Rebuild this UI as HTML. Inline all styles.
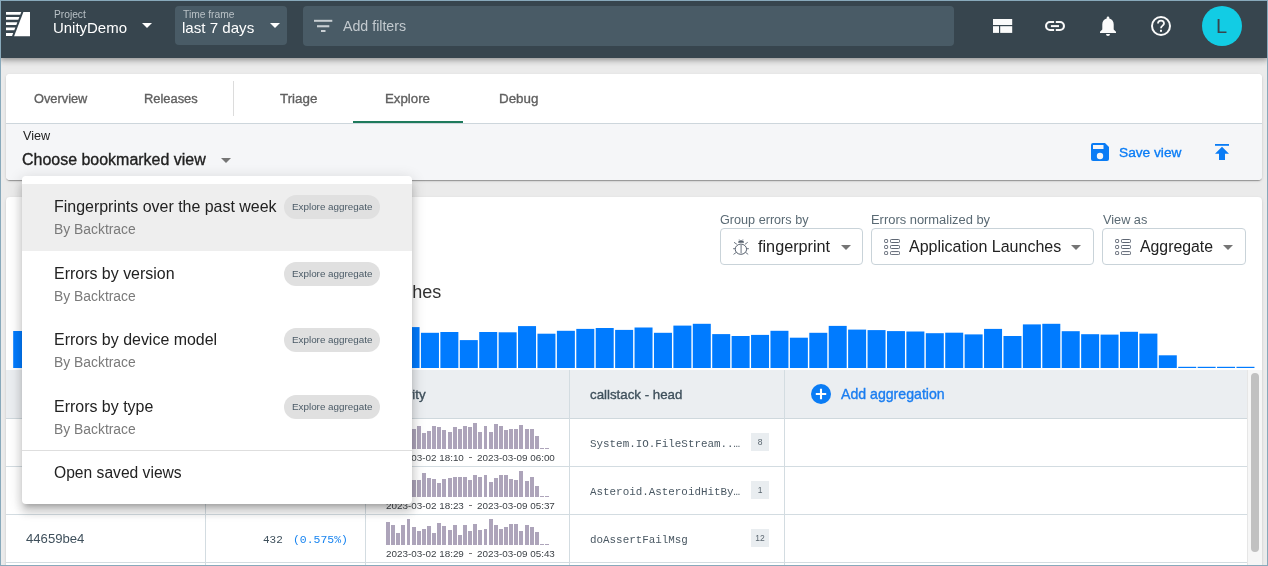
<!DOCTYPE html>
<html><head><meta charset="utf-8"><style>
*{box-sizing:border-box;margin:0;padding:0}
html,body{width:1268px;height:566px;overflow:hidden}
body{position:relative;-webkit-font-smoothing:antialiased;background:#ebebeb;font-family:"Liberation Sans",sans-serif;color:#222}
.abs{position:absolute}
.t{position:absolute;white-space:nowrap;line-height:1;will-change:transform}
#frame{position:absolute;left:0;top:0;width:1268px;height:566px;border:1px solid #88a9bb;pointer-events:none;z-index:100}
#hdr{position:absolute;left:0;top:0;width:1268px;height:58px;background:#37454e;box-shadow:0 2px 4px -1px rgba(0,0,0,.2),0 4px 5px 0 rgba(0,0,0,.14),0 1px 10px 0 rgba(0,0,0,.12);z-index:5}
.hbox{position:absolute;background:#495b66;border-radius:4px}
.caretw{position:absolute;width:0;height:0;border-left:5px solid transparent;border-right:5px solid transparent;border-top:5px solid #fff}
.caretg{position:absolute;width:0;height:0;border-left:5px solid transparent;border-right:5px solid transparent;border-top:5px solid #757575;margin-left:-0.5px}
.card{position:absolute;background:#fff;border-radius:4px;box-shadow:0 2px 1px -1px rgba(0,0,0,.2),0 1px 1px 0 rgba(0,0,0,.14),0 1px 3px 0 rgba(0,0,0,.12)}
.chip{position:absolute;width:96px;height:24px;border-radius:12px;background:#e0e0e0}
</style></head><body>
<div id="hdr">
  <svg class="abs" style="left:6px;top:12px" width="24" height="25" viewBox="0 0 24 25">
    <polygon points="17.4,0 24,0 24,24.2 8.1,24.2" fill="#fff"/>
    <polygon points="0,0.00 15.30,0.00 14.22,2.80 0,2.80" fill="#fff"/>
    <polygon points="0,5.00 13.37,5.00 12.30,7.80 0,7.80" fill="#fff"/>
    <polygon points="0,10.30 11.33,10.30 10.33,12.90 0,12.90" fill="#fff"/>
    <polygon points="0,15.40 9.37,15.40 8.25,18.30 0,18.30" fill="#fff"/>
    <polygon points="0,21.00 7.21,21.00 6.06,24.00 0,24.00" fill="#fff"/>
  </svg>
  <div class="caretw" style="left:142px;top:23px"></div>
  <div class="hbox" style="left:175px;top:6px;width:112px;height:39px"></div>
  <div class="caretw" style="left:270px;top:23px"></div>
  <div class="hbox" style="left:303px;top:6px;width:651px;height:40px"></div>
  <svg class="abs" style="left:314px;top:19px" width="19" height="13" viewBox="0 0 19 13">
    <rect x="0" y="0.8" width="18.3" height="2" fill="#c9cfd3"/>
    <rect x="3" y="6.2" width="12.3" height="2.1" fill="#c9cfd3"/>
    <rect x="7" y="11" width="4.5" height="2" fill="#c9cfd3"/>
  </svg>
  <svg class="abs" style="left:993px;top:19px" width="20" height="15" viewBox="0 0 20 15">
    <rect x="0" y="0" width="19.2" height="6" fill="#fafafa"/>
    <rect x="0" y="7.2" width="6" height="6.7" fill="#fafafa"/>
    <rect x="7.2" y="7.2" width="12" height="6.7" fill="#fafafa"/>
  </svg>
  <svg class="abs" style="left:1045px;top:21px" width="20" height="10" viewBox="0 0 20 10">
    <path d="M9.1 1.05H5A3.95 3.95 0 0 0 5 8.95H9.1M10.8 1.05H15A3.95 3.95 0 0 1 15 8.95H10.8" stroke="#fafafa" stroke-width="2.1" fill="none"/>
    <rect x="5.9" y="4.1" width="8.1" height="2" fill="#fafafa"/>
  </svg>
  <svg class="abs" style="left:1099px;top:16px" width="18" height="20" viewBox="0 0 18 20">
    <path d="M9 0.5c.8 0 1.3.6 1.3 1.3v.7c2.7.7 4.4 3 4.4 5.8v5.2L17 15.8v1.2H1v-1.2l2.3-2.3V8.3c0-2.8 1.700-5.1 4.4-5.8v-.7C7.7 1.1 8.2.5 9 .5z M7 18h4a2 2 0 0 1-4 0z" fill="#fafafa"/>
  </svg>
  <svg class="abs" style="left:1151px;top:16px" width="20" height="20" viewBox="0 0 20 20">
    <circle cx="10" cy="10" r="9" stroke="#fafafa" stroke-width="2" fill="none"/>
    <path d="M7 7.6a3 3 0 0 1 6 0c0 2-3 2.2-3 4.6" stroke="#fafafa" stroke-width="1.8" fill="none"/>
    <rect x="9" y="13.8" width="2" height="2" fill="#fafafa"/>
  </svg>
  <div class="abs" style="left:1202px;top:6px;width:40px;height:40px;border-radius:50%;background:#12cce4"></div>
  <div class="t" style="left:1216px;top:16.1px;font-size:20px;color:#37454e">L</div>
<div class="t" style="left:53.6px;top:9.5px;font-size:10.21px;color:#b9c1c6;">Project</div>
<div class="t" style="left:53.3px;top:20.9px;font-size:14.96px;color:#fff;">UnityDemo</div>
<div class="t" style="left:183.2px;top:10.0px;font-size:10.26px;color:#b9c1c6;">Time frame</div>
<div class="t" style="left:182.4px;top:20.2px;font-size:15.12px;color:#fff;">last 7 days</div>
<div class="t" style="left:343.2px;top:19.2px;font-size:14.20px;color:#c3cacf;">Add filters</div>
</div>
<div class="card" style="left:6px;top:74px;width:1256px;height:106px;overflow:hidden">
  <div class="abs" style="left:0;top:0;width:1256px;height:50px;border-bottom:1px solid #cdd6dc;background:#fff"></div>
  <div class="abs" style="left:0;top:50px;width:1256px;height:56px;background:#f5f6f8"></div>
</div>
<div class="abs" style="left:233px;top:81px;width:1px;height:35px;background:#dcdcdc"></div>
<div class="abs" style="left:353px;top:121px;width:110px;height:2px;background:#1e7a5c"></div>
<div class="caretg" style="left:221.5px;top:158px"></div>
<svg class="abs" style="left:1091px;top:143px" width="18" height="18" viewBox="0 0 18 18">
  <path d="M2 0h12l4 4v12a2 2 0 0 1-2 2H2a2 2 0 0 1-2-2V2a2 2 0 0 1 2-2z" fill="#0a7cf5"/>
  <rect x="2" y="2" width="10.5" height="4" fill="#f5f6f8"/>
  <circle cx="9" cy="13" r="3.2" fill="#f5f6f8"/>
</svg>
<svg class="abs" style="left:1215px;top:144px" width="14" height="16" viewBox="0 0 14 16">
  <rect x="0" y="0" width="14" height="1.8" fill="#0a7cf5"/>
  <path d="M7 2.8L14 9.8H10V15.9H4V9.8H0z" fill="#0a7cf5"/>
</svg>
<div class="t" style="left:33.9px;top:92.6px;font-size:12.80px;color:#606060;-webkit-text-stroke:0.35px currentColor;">Overview</div>
<div class="t" style="left:143.8px;top:92.5px;font-size:12.89px;color:#606060;-webkit-text-stroke:0.35px currentColor;">Releases</div>
<div class="t" style="left:280.0px;top:92.1px;font-size:13.36px;color:#606060;-webkit-text-stroke:0.35px currentColor;">Triage</div>
<div class="t" style="left:385.4px;top:92.2px;font-size:13.25px;color:#606060;-webkit-text-stroke:0.35px currentColor;">Explore</div>
<div class="t" style="left:498.5px;top:92.1px;font-size:13.36px;color:#606060;-webkit-text-stroke:0.35px currentColor;">Debug</div>
<div class="t" style="left:22.5px;top:130.1px;font-size:12.65px;color:#222;">View</div>
<div class="t" style="left:21.7px;top:151.9px;font-size:15.98px;color:#222;-webkit-text-stroke:0.35px currentColor;">Choose bookmarked view</div>
<div class="t" style="left:1119.3px;top:146.0px;font-size:13.69px;color:#0a7cf5;-webkit-text-stroke:0.35px currentColor;">Save view</div>
<div class="card" style="left:6px;top:197px;width:1256px;height:380px"></div>
<div class="abs" style="left:720px;top:228px;width:143px;height:37px;border:1px solid #c9d3d9;border-radius:4px;background:#fff"></div>
<svg class="abs" style="left:733px;top:239px" width="16" height="17" viewBox="0 0 16 17" fill="none" stroke="#56606d" stroke-width="1">
  <path d="M5.1 3.7L5.7 1.7Q8 0.9 10.4 1.7L11.1 3.7Z" fill="#56606d" stroke="none"/>
  <path d="M5.6 0.4h1.3M9.2 0.4h1.3" stroke-width=".6" stroke="#9aa2ab"/>
  <ellipse cx="7.9" cy="10.2" rx="5.7" ry="5.1"/>
  <path d="M8.1 5.3v9" stroke="#8a929c" stroke-width="1.3"/>
  <path d="M1 3.3L3.9 5.3M14.7 3.3L12 5.3M0.1 9.7H2.3M13.6 9.7h2.3M0.5 15.4L3.7 13.1M15.2 15.4L12.2 13.1" stroke="#6d7682"/>
</svg>
<div class="caretg" style="left:841px;top:245px"></div>
<div class="abs" style="left:871px;top:228px;width:223px;height:37px;border:1px solid #c9d3d9;border-radius:4px;background:#fff"></div>
<div class="caretg" style="left:1071.5px;top:245px"></div>
<div class="abs" style="left:1102px;top:228px;width:144px;height:37px;border:1px solid #c9d3d9;border-radius:4px;background:#fff"></div>
<div class="caretg" style="left:1223.5px;top:245px"></div>
<svg class="abs" style="left:884px;top:239px" width="16" height="16" viewBox="0 0 16 16" fill="none" stroke="#5e6673" stroke-width="1">
  <rect x="0.6" y="0.5" width="3" height="3" rx=".7"/><rect x="0.6" y="6.5" width="3" height="3" rx=".7"/><rect x="0.6" y="12.6" width="3" height="3" rx=".7"/>
  <rect x="6.5" y="0.5" width="9" height="3" rx=".8"/><rect x="6.5" y="6.5" width="9" height="3" rx=".8"/><rect x="6.5" y="12.6" width="9" height="3" rx=".8"/>
</svg>
<svg class="abs" style="left:1115px;top:239px" width="16" height="16" viewBox="0 0 16 16" fill="none" stroke="#5e6673" stroke-width="1">
  <rect x="0.6" y="0.5" width="3" height="3" rx=".7"/><rect x="0.6" y="6.5" width="3" height="3" rx=".7"/><rect x="0.6" y="12.6" width="3" height="3" rx=".7"/>
  <rect x="6.5" y="0.5" width="9" height="3" rx=".8"/><rect x="6.5" y="6.5" width="9" height="3" rx=".8"/><rect x="6.5" y="12.6" width="9" height="3" rx=".8"/>
</svg>
<div class="t" style="left:720.4px;top:214.0px;font-size:12.65px;color:#5a6a74;">Group errors by</div>
<div class="t" style="left:870.9px;top:213.8px;font-size:12.92px;color:#5a6a74;">Errors normalized by</div>
<div class="t" style="left:1103.0px;top:213.9px;font-size:12.72px;color:#5a6a74;">View as</div>
<div class="t" style="left:757.5px;top:238.3px;font-size:16.23px;color:#222;">fingerprint</div>
<div class="t" style="left:909.1px;top:238.4px;font-size:16.02px;color:#222;">Application Launches</div>
<div class="t" style="left:1140.0px;top:238.6px;font-size:15.83px;color:#222;">Aggregate</div>
<div class="abs" style="left:22px;top:270px;width:430px;height:40px;overflow:hidden"><div class="t" style="right:10.5px;top:12.6px;font-size:18.00px;color:#333">Errors by fingerprint normalized by Application Launches</div></div>
<svg class="abs" style="left:0;top:0" width="1268" height="370"><g fill="#007bff"><rect x="13.20" y="331.00" width="18" height="37.00"/><rect x="32.62" y="328.38" width="18" height="39.62"/><rect x="52.03" y="331.44" width="18" height="36.56"/><rect x="71.45" y="329.70" width="18" height="38.30"/><rect x="90.87" y="332.04" width="18" height="35.96"/><rect x="110.29" y="332.26" width="18" height="35.74"/><rect x="129.70" y="326.66" width="18" height="41.34"/><rect x="149.12" y="326.13" width="18" height="41.87"/><rect x="168.54" y="334.37" width="18" height="33.63"/><rect x="187.95" y="328.59" width="18" height="39.41"/><rect x="207.37" y="328.34" width="18" height="39.66"/><rect x="226.79" y="335.96" width="18" height="32.04"/><rect x="246.20" y="330.70" width="18" height="37.30"/><rect x="265.62" y="334.36" width="18" height="33.64"/><rect x="285.04" y="330.76" width="18" height="37.24"/><rect x="304.45" y="332.39" width="18" height="35.61"/><rect x="323.87" y="327.51" width="18" height="40.49"/><rect x="343.29" y="332.35" width="18" height="35.65"/><rect x="362.71" y="334.68" width="18" height="33.32"/><rect x="382.12" y="331.23" width="18" height="36.77"/><rect x="401.54" y="327.10" width="18" height="40.90"/><rect x="420.96" y="332.80" width="18" height="35.20"/><rect x="440.37" y="332.00" width="18" height="36.00"/><rect x="459.79" y="340.10" width="18" height="27.90"/><rect x="479.21" y="332.00" width="18" height="36.00"/><rect x="498.63" y="332.30" width="18" height="35.70"/><rect x="518.04" y="326.10" width="18" height="41.90"/><rect x="537.46" y="333.70" width="18" height="34.30"/><rect x="556.88" y="330.80" width="18" height="37.20"/><rect x="576.29" y="328.90" width="18" height="39.10"/><rect x="595.71" y="328.00" width="18" height="40.00"/><rect x="615.13" y="329.90" width="18" height="38.10"/><rect x="634.54" y="327.50" width="18" height="40.50"/><rect x="653.96" y="332.80" width="18" height="35.20"/><rect x="673.38" y="325.60" width="18" height="42.40"/><rect x="692.80" y="323.80" width="18" height="44.20"/><rect x="712.21" y="334.10" width="18" height="33.90"/><rect x="731.63" y="336.00" width="18" height="32.00"/><rect x="751.05" y="334.90" width="18" height="33.10"/><rect x="770.46" y="330.80" width="18" height="37.20"/><rect x="789.88" y="337.70" width="18" height="30.30"/><rect x="809.30" y="332.80" width="18" height="35.20"/><rect x="828.71" y="325.90" width="18" height="42.10"/><rect x="848.13" y="329.60" width="18" height="38.40"/><rect x="867.55" y="330.10" width="18" height="37.90"/><rect x="886.97" y="331.10" width="18" height="36.90"/><rect x="906.38" y="331.50" width="18" height="36.50"/><rect x="925.80" y="333.20" width="18" height="34.80"/><rect x="945.22" y="332.70" width="18" height="35.30"/><rect x="964.63" y="334.40" width="18" height="33.60"/><rect x="984.05" y="328.90" width="18" height="39.10"/><rect x="1003.47" y="336.00" width="18" height="32.00"/><rect x="1022.88" y="324.40" width="18" height="43.60"/><rect x="1042.30" y="323.80" width="18" height="44.20"/><rect x="1061.72" y="331.20" width="18" height="36.80"/><rect x="1081.14" y="334.20" width="18" height="33.80"/><rect x="1100.55" y="334.60" width="18" height="33.40"/><rect x="1119.97" y="331.80" width="18" height="36.20"/><rect x="1139.39" y="333.60" width="18" height="34.40"/><rect x="1158.80" y="355.30" width="18" height="12.70"/><rect x="1178.22" y="366.80" width="18" height="1.20"/><rect x="1197.64" y="366.80" width="18" height="1.20"/><rect x="1217.05" y="366.80" width="18" height="1.20"/><rect x="1236.47" y="366.80" width="18" height="1.20"/></g></svg><div class="abs" style="left:6px;top:370px;width:1241px;height:49px;background:#ebeef1;border-bottom:1px solid #cfd8dd"></div>
<div class="abs" style="left:6px;top:419px;width:1241px;height:48px;border-bottom:1px solid #d3dce1;background:#fff"></div>
<div class="abs" style="left:6px;top:467px;width:1241px;height:48px;border-bottom:1px solid #d3dce1;background:#fff"></div>
<div class="abs" style="left:6px;top:515px;width:1241px;height:48px;border-bottom:1px solid #d3dce1;background:#fff"></div>
<div class="abs" style="left:205px;top:370px;width:1px;height:196px;background:#d3dce1"></div>
<div class="abs" style="left:365px;top:370px;width:1px;height:196px;background:#d3dce1"></div>
<div class="abs" style="left:569px;top:370px;width:1px;height:196px;background:#d3dce1"></div>
<div class="abs" style="left:784px;top:370px;width:1px;height:196px;background:#d3dce1"></div>
<svg class="abs" style="left:811px;top:384px" width="20" height="20" viewBox="0 0 20 20">
  <circle cx="10" cy="10" r="10" fill="#0a7cf5"/><path d="M10 4.8v10.4M4.8 10h10.4" stroke="#fff" stroke-width="2.1"/>
</svg>
<div class="t" style="left:26px;top:387px;font-size:13.3px;color:#3f505c;-webkit-text-stroke:0.35px currentColor;">fingerprint</div>
<div class="t" style="left:226px;top:387px;font-size:13.3px;color:#3f505c;-webkit-text-stroke:0.35px currentColor;">count</div>
<div class="t" style="left:385.0px;top:387.6px;font-size:13.30px;color:#3f505c;-webkit-text-stroke:0.35px currentColor;">activity</div>
<div class="t" style="left:589.5px;top:387.6px;font-size:13.30px;color:#3f505c;-webkit-text-stroke:0.35px currentColor;">callstack - head</div>
<div class="t" style="left:841.4px;top:386.8px;font-size:14.13px;color:#1a7df0;-webkit-text-stroke:0.35px currentColor;">Add aggregation</div>
<svg class="abs" style="left:0;top:0" width="1268" height="566"><g fill="#ada4ba" shape-rendering="crispEdges"><rect x="386.00" y="430.80" width="3.9" height="18.00"/><rect x="391.13" y="428.80" width="3.9" height="20.00"/><rect x="396.27" y="432.80" width="3.9" height="16.00"/><rect x="401.40" y="427.80" width="3.9" height="21.00"/><rect x="406.54" y="429.80" width="3.9" height="19.00"/><rect x="411.67" y="429.40" width="3.9" height="19.40"/><rect x="416.80" y="426.40" width="3.9" height="22.40"/><rect x="421.94" y="433.30" width="3.9" height="15.50"/><rect x="427.07" y="431.30" width="3.9" height="17.50"/><rect x="432.21" y="426.40" width="3.9" height="22.40"/><rect x="437.34" y="427.40" width="3.9" height="21.40"/><rect x="442.47" y="430.30" width="3.9" height="18.50"/><rect x="447.61" y="432.30" width="3.9" height="16.50"/><rect x="452.74" y="427.40" width="3.9" height="21.40"/><rect x="457.88" y="429.40" width="3.9" height="19.40"/><rect x="463.01" y="426.40" width="3.9" height="22.40"/><rect x="468.14" y="427.40" width="3.9" height="21.40"/><rect x="473.28" y="423.40" width="3.9" height="25.40"/><rect x="478.41" y="432.30" width="3.9" height="16.50"/><rect x="483.55" y="426.40" width="3.9" height="22.40"/><rect x="488.68" y="432.30" width="3.9" height="16.50"/><rect x="493.81" y="424.40" width="3.9" height="24.40"/><rect x="498.95" y="426.40" width="3.9" height="22.40"/><rect x="504.08" y="430.30" width="3.9" height="18.50"/><rect x="509.22" y="429.40" width="3.9" height="19.40"/><rect x="514.35" y="429.40" width="3.9" height="19.40"/><rect x="519.48" y="425.40" width="3.9" height="23.40"/><rect x="524.62" y="429.40" width="3.9" height="19.40"/><rect x="529.75" y="429.40" width="3.9" height="19.40"/><rect x="534.89" y="436.30" width="3.9" height="12.50"/><rect x="540.02" y="447.80" width="3.9" height="1.00"/><rect x="545.15" y="447.80" width="3.9" height="1.00"/><rect x="386.00" y="479.80" width="3.9" height="17.00"/><rect x="391.13" y="477.80" width="3.9" height="19.00"/><rect x="396.27" y="474.80" width="3.9" height="22.00"/><rect x="401.40" y="478.80" width="3.9" height="18.00"/><rect x="406.54" y="480.80" width="3.9" height="16.00"/><rect x="411.67" y="480.30" width="3.9" height="16.50"/><rect x="416.80" y="480.30" width="3.9" height="16.50"/><rect x="421.94" y="473.40" width="3.9" height="23.40"/><rect x="427.07" y="478.30" width="3.9" height="18.50"/><rect x="432.21" y="479.30" width="3.9" height="17.50"/><rect x="437.34" y="483.30" width="3.9" height="13.50"/><rect x="442.47" y="479.30" width="3.9" height="17.50"/><rect x="447.61" y="478.30" width="3.9" height="18.50"/><rect x="452.74" y="477.40" width="3.9" height="19.40"/><rect x="457.88" y="477.40" width="3.9" height="19.40"/><rect x="463.01" y="477.40" width="3.9" height="19.40"/><rect x="468.14" y="480.30" width="3.9" height="16.50"/><rect x="473.28" y="475.40" width="3.9" height="21.40"/><rect x="478.41" y="477.40" width="3.9" height="19.40"/><rect x="483.55" y="475.40" width="3.9" height="21.40"/><rect x="488.68" y="482.30" width="3.9" height="14.50"/><rect x="493.81" y="478.30" width="3.9" height="18.50"/><rect x="498.95" y="475.40" width="3.9" height="21.40"/><rect x="504.08" y="475.40" width="3.9" height="21.40"/><rect x="509.22" y="479.30" width="3.9" height="17.50"/><rect x="514.35" y="480.30" width="3.9" height="16.50"/><rect x="519.48" y="471.40" width="3.9" height="25.40"/><rect x="524.62" y="481.30" width="3.9" height="15.50"/><rect x="529.75" y="477.40" width="3.9" height="19.40"/><rect x="534.89" y="486.30" width="3.9" height="10.50"/><rect x="540.02" y="495.80" width="3.9" height="1.00"/><rect x="545.15" y="495.80" width="3.9" height="1.00"/><rect x="386.00" y="522.10" width="3.9" height="22.70"/><rect x="391.13" y="524.90" width="3.9" height="19.90"/><rect x="396.27" y="533.00" width="3.9" height="11.80"/><rect x="401.40" y="524.90" width="3.9" height="19.90"/><rect x="406.54" y="519.00" width="3.9" height="25.80"/><rect x="411.67" y="527.10" width="3.9" height="17.70"/><rect x="416.80" y="531.00" width="3.9" height="13.80"/><rect x="421.94" y="528.90" width="3.9" height="15.90"/><rect x="427.07" y="526.10" width="3.9" height="18.70"/><rect x="432.21" y="533.00" width="3.9" height="11.80"/><rect x="437.34" y="523.10" width="3.9" height="21.70"/><rect x="442.47" y="526.10" width="3.9" height="18.70"/><rect x="447.61" y="530.00" width="3.9" height="14.80"/><rect x="452.74" y="524.90" width="3.9" height="19.90"/><rect x="457.88" y="535.00" width="3.9" height="9.80"/><rect x="463.01" y="524.90" width="3.9" height="19.90"/><rect x="468.14" y="531.00" width="3.9" height="13.80"/><rect x="473.28" y="524.10" width="3.9" height="20.70"/><rect x="478.41" y="530.00" width="3.9" height="14.80"/><rect x="483.55" y="528.90" width="3.9" height="15.90"/><rect x="488.68" y="519.00" width="3.9" height="25.80"/><rect x="493.81" y="524.90" width="3.9" height="19.90"/><rect x="498.95" y="528.90" width="3.9" height="15.90"/><rect x="504.08" y="527.10" width="3.9" height="17.70"/><rect x="509.22" y="524.10" width="3.9" height="20.70"/><rect x="514.35" y="524.10" width="3.9" height="20.70"/><rect x="519.48" y="531.00" width="3.9" height="13.80"/><rect x="524.62" y="524.90" width="3.9" height="19.90"/><rect x="529.75" y="527.10" width="3.9" height="17.70"/><rect x="534.89" y="532.00" width="3.9" height="12.80"/><rect x="540.02" y="543.80" width="3.9" height="1.00"/><rect x="545.15" y="543.80" width="3.9" height="1.00"/></g></svg><div class="t" style="left:385.5px;top:452.5px;font-size:9.87px;color:#3a3f44;">2023-03-02 18:10</div>
<div class="t" style="left:476.5px;top:452.5px;font-size:9.87px;color:#3a3f44;">2023-03-09 06:00</div>
<div class="abs" style="left:469px;top:457.2px;width:2.5px;height:1px;background:#777"></div>
<div class="t" style="left:385.5px;top:500.5px;font-size:9.87px;color:#3a3f44;">2023-03-02 18:23</div>
<div class="t" style="left:476.5px;top:500.5px;font-size:9.87px;color:#3a3f44;">2023-03-09 05:37</div>
<div class="abs" style="left:469px;top:505.2px;width:2.5px;height:1px;background:#777"></div>
<div class="t" style="left:385.5px;top:548.5px;font-size:9.87px;color:#3a3f44;">2023-03-02 18:29</div>
<div class="t" style="left:476.5px;top:548.5px;font-size:9.87px;color:#3a3f44;">2023-03-09 05:43</div>
<div class="abs" style="left:469px;top:553.2px;width:2.5px;height:1px;background:#777"></div>
<div class="t" style="left:589.9px;top:439.0px;font-size:10.88px;color:#4a5863;font-family:'Liberation Mono',monospace;">System.IO.FileStream..…</div>
<div class="abs" style="left:751px;top:433px;width:18px;height:18px;background:#e9edf0;font-size:8.5px;color:#5a666f;text-align:center;line-height:18px;will-change:transform">8</div>
<div class="t" style="left:589.9px;top:487.0px;font-size:10.88px;color:#4a5863;font-family:'Liberation Mono',monospace;">Asteroid.AsteroidHitBy…</div>
<div class="abs" style="left:751px;top:481px;width:18px;height:18px;background:#e9edf0;font-size:8.5px;color:#5a666f;text-align:center;line-height:18px;will-change:transform">1</div>
<div class="t" style="left:589.9px;top:535.0px;font-size:10.88px;color:#4a5863;font-family:'Liberation Mono',monospace;">doAssertFailMsg</div>
<div class="abs" style="left:751px;top:529px;width:18px;height:18px;background:#e9edf0;font-size:8.5px;color:#5a666f;text-align:center;line-height:18px;will-change:transform">12</div>
<div class="t" style="left:25.7px;top:531.8px;font-size:13.14px;color:#3f505c;">44659be4</div>
<div class="t" style="left:262.5px;top:534.6px;font-size:10.99px;color:#3f505c;font-family:'Liberation Mono',monospace;">432</div>
<div class="t" style="left:292.5px;top:534.2px;font-size:11.46px;color:#1a85f0;font-family:'Liberation Mono',monospace;">(0.575%)</div>
<div class="abs" style="left:1247px;top:370px;width:15px;height:196px;background:#f6f6f6;border-left:1px solid #e6e6e6"></div>
<div class="abs" style="left:1251px;top:373px;width:8px;height:179px;background:#c1c1c1;border-radius:4px"></div>
<div class="abs" style="left:22px;top:176px;width:390px;height:328px;background:#fff;border-radius:4px;box-shadow:0 5px 5px -3px rgba(0,0,0,.2),0 8px 10px 1px rgba(0,0,0,.14),0 3px 14px 2px rgba(0,0,0,.12);z-index:10"></div>
<div style="position:absolute;left:0;top:0;z-index:11">
<div class="abs" style="left:22px;top:184px;width:390px;height:67px;background:#eeeeee"></div>
<div class="abs" style="left:22px;top:450px;width:390px;height:1px;background:#dedede"></div>
<div class="t" style="left:53.7px;top:198.7px;font-size:15.96px;color:#222;">Fingerprints over the past week</div>
<div class="t" style="left:53.9px;top:222.5px;font-size:13.89px;color:#7a7a7a;">By Backtrace</div>
<div class="chip" style="left:284px;top:195px"></div>
<div class="t" style="left:292.0px;top:201.5px;font-size:9.86px;color:#4a5a66;">Explore aggregate</div>
<div class="t" style="left:53.7px;top:265.7px;font-size:15.96px;color:#222;">Errors by version</div>
<div class="t" style="left:53.9px;top:289.5px;font-size:13.89px;color:#7a7a7a;">By Backtrace</div>
<div class="chip" style="left:284px;top:262px"></div>
<div class="t" style="left:292.0px;top:268.5px;font-size:9.86px;color:#4a5a66;">Explore aggregate</div>
<div class="t" style="left:53.7px;top:331.7px;font-size:15.96px;color:#222;">Errors by device model</div>
<div class="t" style="left:53.9px;top:355.5px;font-size:13.89px;color:#7a7a7a;">By Backtrace</div>
<div class="chip" style="left:284px;top:328px"></div>
<div class="t" style="left:292.0px;top:334.5px;font-size:9.86px;color:#4a5a66;">Explore aggregate</div>
<div class="t" style="left:53.7px;top:398.7px;font-size:15.96px;color:#222;">Errors by type</div>
<div class="t" style="left:53.9px;top:422.5px;font-size:13.89px;color:#7a7a7a;">By Backtrace</div>
<div class="chip" style="left:284px;top:395px"></div>
<div class="t" style="left:292.0px;top:401.5px;font-size:9.86px;color:#4a5a66;">Explore aggregate</div>
<div class="t" style="left:54.0px;top:464.9px;font-size:15.63px;color:#222;">Open saved views</div>
</div>
<div id="frame"></div>
</body></html>
